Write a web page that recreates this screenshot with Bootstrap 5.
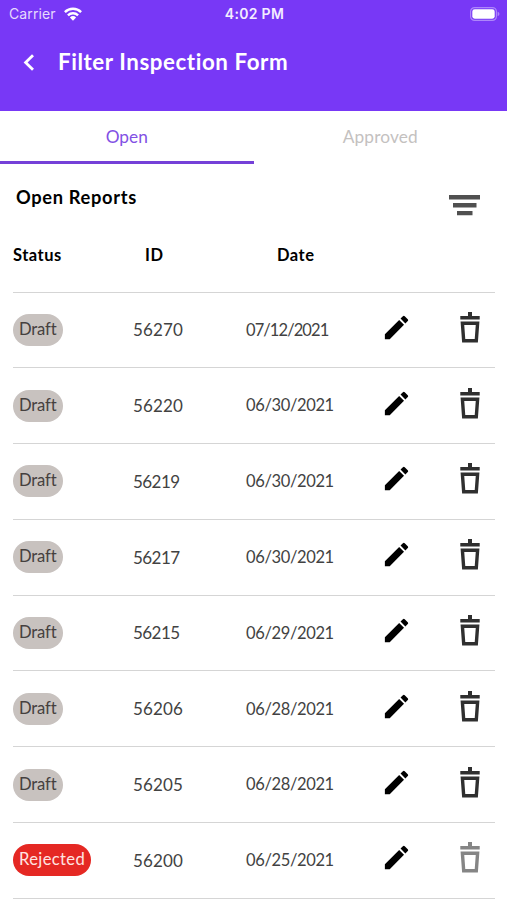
<!DOCTYPE html>
<html lang="en">
<head>
<meta charset="utf-8">
<meta name="viewport" content="width=device-width, initial-scale=1">
<title>Filter Inspection Form</title>
<link href="https://cdn.jsdelivr.net/npm/bootstrap@5.3.0/dist/css/bootstrap.min.css" rel="stylesheet">
<style>
body{font-family:Lato,"Liberation Sans",sans-serif;color:#000;background:#fff;height:900px;overflow:hidden}
svg{display:block;flex:none}
.app-header{background:#7838f6;height:110.5px;color:#fff}
.status-bar{height:27px;font-family:Inter,sans-serif;line-height:27px;padding:0 7px 0 9px}
.status-bar>div{flex:1 1 0}
.carrier{font-size:14px;color:#e6dafd;letter-spacing:.1px}
.clock{font-size:14px;font-weight:600;color:#f3edff;letter-spacing:.3px}
.title-bar{height:70px;padding-left:23px}
.title-bar h1{font-size:22.3px;font-weight:700;margin:0 0 0 23px;letter-spacing:.58px}
.tab-strip{height:53px}
.tab-strip .nav-link{border-radius:0;padding:0;height:53px;line-height:51px;font-size:17.3px;color:#c4c1bf;border-bottom:3px solid transparent}
.tab-strip .nav-link+.nav-link{line-height:52.5px;letter-spacing:.15px}
.tab-strip .nav-link.active{color:#8250e4;border-color:#7540d8}
.section-head{height:66px;padding:0 27px 0 16px}
.section-head h2{font-size:18.3px;font-weight:700;margin:0;line-height:66px;letter-spacing:.66px}
.reports{padding:0 12px 0 13px}
.report-row{display:grid;grid-template-columns:120px 113px 135px 79px 1fr;align-items:center;height:75.8px;border-bottom:1.4px solid #d5d5d5;font-size:17px;color:#424242}
.report-row svg{margin-bottom:5px}
.report-head{height:63px;padding-bottom:11px;color:#000;font-weight:700;font-size:16.5px;letter-spacing:.5px}
.date-head{padding-left:31px}
.report-id{letter-spacing:.15px}
.report-id.tight{letter-spacing:-.55px}
.report-date{font-size:16.5px;letter-spacing:-.37px}
.report-date.tight{letter-spacing:-.92px}
.state-pill{display:inline-block;height:32px;line-height:31px;border-radius:16px;padding:0 6px;font-size:16.6px;letter-spacing:-.15px;background:#c8c2bf;color:#45403e}
.state-pill.rejected{background:#e52823;color:#ffe4e1;letter-spacing:.35px}
</style>
<script src="https://cdn.jsdelivr.net/npm/bootstrap@5.3.0/dist/js/bootstrap.bundle.min.js"></script>
</head>
<body>
<svg width="0" height="0" class="position-absolute">
<symbol id="pencil" viewBox="0 0 24 24"><path d="M3 17.25V21h3.75L17.81 9.94l-3.75-3.75L3 17.25zM20.71 7.04c.39-.39.39-1.02 0-1.41l-2.34-2.34a1 1 0 0 0-1.41 0l-1.83 1.83 3.75 3.75 1.83-1.83z"/></symbol>
<symbol id="trash" viewBox="0 0 20 31"><path fill="currentColor" d="M8 0h4v4h7.7v3.5H.3V4H8z"/><path fill="none" stroke="currentColor" stroke-width="3.4" d="M2.4 11.2h15.2l-1.3 17.6H3.7z"/></symbol>
</svg>
<header class="app-header">
  <div class="status-bar d-flex align-items-center">
    <div class="carrier d-flex align-items-center"><span>Carrier</span>
      <svg class="ms-2" width="18" height="14" viewBox="0 0 18 14" fill="none" stroke="#fff" stroke-width="2.4"><path d="M.9 5.1a11.5 11.5 0 0 1 16.2 0M3.9 8.3a7.3 7.3 0 0 1 10.2 0"/><path fill="#fff" stroke="none" d="M5.9 10.4a4.5 4.5 0 0 1 6.2 0L9 13.7z"/></svg>
    </div>
    <div class="clock text-center">4:02 PM</div>
    <div class="d-flex justify-content-end"><svg width="30" height="14" viewBox="0 0 30 14"><rect x=".6" y=".6" width="25.8" height="12.8" rx="4" fill="none" stroke="#ad86fa" stroke-width="1.2"/><rect x="2.3" y="2.3" width="22.4" height="9.4" rx="2.4" fill="#fff"/><path d="M27.6 4.8c2.4.7 2.4 3.7 0 4.4z" fill="#ad86fa"/></svg></div>
  </div>
  <div class="title-bar d-flex align-items-center">
    <svg width="12" height="17" viewBox="0 0 12 17" fill="none" stroke="#fff" stroke-width="2.8"><path d="M10 1.2 2.6 8.5l7.4 7.3"/></svg>
    <h1>Filter Inspection Form</h1>
  </div>
</header>
<nav class="tab-strip nav nav-justified">
  <a class="nav-link active" href="#">Open</a>
  <a class="nav-link" href="#">Approved</a>
</nav>
<main>
  <div class="section-head d-flex justify-content-between">
    <h2>Open Reports</h2>
    <svg class="mt-4" width="31" height="36" viewBox="0 0 31 36" fill="#505050"><path d="M0 7h31v4.4H0zM4 15h23.5v4.4H4zM8 23h15.5v4.2H8z"/></svg>
  </div>
  <div class="reports">
    <div class="report-row report-head"><span>Status</span><span class="ps-2 ms-1">ID</span><span class="date-head">Date</span></div>
    <div class="report-row"><div><span class="state-pill">Draft</span></div><span class="report-id">56270</span><span class="report-date tight">07/12/2021</span><svg width="31" height="31"><use href="#pencil"/></svg><svg width="20" height="31" color="#2f2f2f"><use href="#trash"/></svg></div>
    <div class="report-row"><div><span class="state-pill">Draft</span></div><span class="report-id">56220</span><span class="report-date">06/30/2021</span><svg width="31" height="31"><use href="#pencil"/></svg><svg width="20" height="31" color="#2f2f2f"><use href="#trash"/></svg></div>
    <div class="report-row"><div><span class="state-pill">Draft</span></div><span class="report-id tight">56219</span><span class="report-date">06/30/2021</span><svg width="31" height="31"><use href="#pencil"/></svg><svg width="20" height="31" color="#2f2f2f"><use href="#trash"/></svg></div>
    <div class="report-row"><div><span class="state-pill">Draft</span></div><span class="report-id tight">56217</span><span class="report-date">06/30/2021</span><svg width="31" height="31"><use href="#pencil"/></svg><svg width="20" height="31" color="#2f2f2f"><use href="#trash"/></svg></div>
    <div class="report-row"><div><span class="state-pill">Draft</span></div><span class="report-id tight">56215</span><span class="report-date">06/29/2021</span><svg width="31" height="31"><use href="#pencil"/></svg><svg width="20" height="31" color="#2f2f2f"><use href="#trash"/></svg></div>
    <div class="report-row"><div><span class="state-pill">Draft</span></div><span class="report-id">56206</span><span class="report-date">06/28/2021</span><svg width="31" height="31"><use href="#pencil"/></svg><svg width="20" height="31" color="#2f2f2f"><use href="#trash"/></svg></div>
    <div class="report-row"><div><span class="state-pill">Draft</span></div><span class="report-id">56205</span><span class="report-date">06/28/2021</span><svg width="31" height="31"><use href="#pencil"/></svg><svg width="20" height="31" color="#2f2f2f"><use href="#trash"/></svg></div>
    <div class="report-row"><div><span class="state-pill rejected">Rejected</span></div><span class="report-id">56200</span><span class="report-date">06/25/2021</span><svg width="31" height="31"><use href="#pencil"/></svg><svg width="20" height="31" color="#858585"><use href="#trash"/></svg></div>
  </div>
</main>
</body>
</html>
